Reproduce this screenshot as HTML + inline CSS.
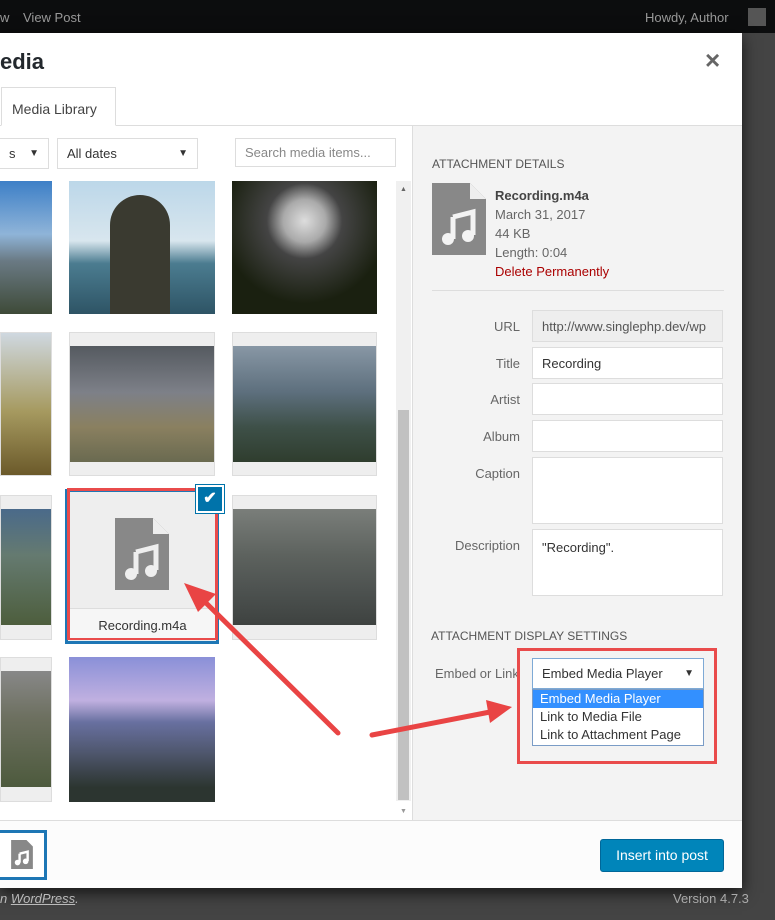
<!DOCTYPE html>
<html><head><meta charset="utf-8">
<style>
*{box-sizing:border-box;margin:0;padding:0}
body{width:775px;height:920px;overflow:hidden;background:#444;font-family:"Liberation Sans",sans-serif;position:relative;color:#444}
.abs{position:absolute}
.top{left:0;top:0;width:775px;height:33px;background:#0c0d0e;color:#999;font-size:13px}
.modal{left:0;top:33px;width:742px;height:855px;background:#fff;box-shadow:0 5px 15px rgba(0,0,0,.7)}
.side{left:412px;top:126px;width:330px;height:694px;background:#f3f3f3;border-left:1px solid #ddd}
.inp{background:#fff;border:1px solid #ddd;font-size:13px;color:#333;padding:0 9px;display:flex;align-items:center}
.lbl{font-size:13px;color:#666;text-align:right;width:108px}
.th{background:#eee;border:1px solid #ddd}
</style></head><body>
<div class="abs top">
 <span class="abs" style="left:0;top:10px">w</span>
 <span class="abs" style="left:23px;top:10px">View Post</span>
 <span class="abs" style="left:645px;top:10px">Howdy, Author</span>
 <div class="abs" style="left:748px;top:8px;width:18px;height:18px;background:#555"></div>
</div>
<div class="abs modal">
 <div class="abs" style="left:0;top:16px;font-size:22px;font-weight:bold;color:#23282d">edia</div>
 <div class="abs" style="left:705px;top:14px;font-size:26px;font-weight:bold;color:#666;line-height:1">×</div>
 <div class="abs" style="left:0;top:92px;width:742px;border-top:1px solid #ddd"></div>
 <div class="abs" style="left:1px;top:54px;width:115px;height:39px;border:1px solid #ddd;border-bottom:1px solid #fff;background:#fff;font-size:14px;color:#444;padding:13px 0 0 10px">Media Library</div>
</div>
<div class="abs inp" style="left:-1px;top:138px;width:50px;height:31px;justify-content:space-between;font-size:13px">s<span style="font-size:10px">▼</span></div>
<div class="abs inp" style="left:57px;top:138px;width:141px;height:31px;justify-content:space-between">All dates<span style="font-size:10px">▼</span></div>
<div class="abs inp" style="left:235px;top:138px;width:161px;height:29px;color:#888">Search media items...</div>
<div class="abs" style="left:0;top:181px;width:52px;height:133px;background:linear-gradient(#3d7fc7,#8fb4d8 40%,#6a7a84 60%,#3e4a38)"></div>
<div class="abs" style="left:69px;top:181px;width:146px;height:133px;background:linear-gradient(#bcd7e9,#d8e6ee 45%,#4b7c90 62%,#2e5465)"></div>
<div class="abs" style="left:110px;top:195px;width:60px;height:119px;background:#3a3a30;border-radius:30px 30px 0 0"></div>
<div class="abs" style="left:232px;top:181px;width:145px;height:133px;background:radial-gradient(circle at 50% 30%,#ddd 0,#aaa 18%,#444 32%,#1a2010 70%)"></div>
<div class="abs th" style="left:0;top:332px;width:52px;height:144px;background:linear-gradient(#cfd8e0,#a69a60 55%,#6b5a2a)"></div>
<div class="abs th" style="left:69px;top:332px;width:146px;height:144px"><div style="margin-top:13px;height:116px;background:linear-gradient(#555a60,#7d8088 40%,#8a8060 70%,#6a6a50)"></div></div>
<div class="abs th" style="left:232px;top:332px;width:145px;height:144px"><div style="margin-top:13px;height:116px;background:linear-gradient(#8897a5,#5d6f7d 40%,#3e5048 70%,#2f3d2e)"></div></div>
<div class="abs th" style="left:0;top:495px;width:52px;height:145px"><div style="margin-top:13px;height:116px;background:linear-gradient(#4a6a8a,#657a70 40%,#4d5e3d)"></div></div>
<div class="abs" style="left:65px;top:489px;width:154px;height:155px;border:3px solid #1e77b5;background:#eee"></div>
<div class="abs" style="left:67px;top:488px;width:151px;height:152px;border:3px solid #e94b4b"></div>
<svg class="abs" style="left:115px;top:518px" width="54" height="72" viewBox="0 0 54 72"><path d="M0 0H38L54 16V72H0Z" fill="#888"/><path d="M38 0V16H54" fill="#eee"/><path d="M21 34L41 29V52" stroke="#eee" stroke-width="5" fill="none"/><path d="M21 34V56" stroke="#eee" stroke-width="5"/><circle cx="16" cy="56" r="6" fill="#eee"/><circle cx="36" cy="53" r="6" fill="#eee"/></svg>
<div class="abs" style="left:70px;top:608px;width:145px;height:30px;border-top:1px solid #ddd;background:#f6f6f6;font-size:13px;color:#333;text-align:center;padding-top:9px">Recording.m4a</div>
<div class="abs" style="left:196px;top:485px;width:28px;height:28px;background:#0073aa;border:2px solid #fff;outline:1px solid #0073aa;color:#fff;font-size:16px;text-align:center;line-height:24px;font-weight:bold">✔</div>
<div class="abs th" style="left:232px;top:495px;width:145px;height:145px"><div style="margin-top:13px;height:116px;background:linear-gradient(#7a7e7a,#5d625e 40%,#4d5250 70%,#3e4240)"></div></div>
<div class="abs th" style="left:0;top:657px;width:52px;height:145px"><div style="margin-top:13px;height:116px;background:linear-gradient(#888,#6d7060 40%,#4d5a3d)"></div></div>
<div class="abs" style="left:69px;top:657px;width:146px;height:145px;background:linear-gradient(#8a90d8,#c0b0e0 30%,#6870a0 45%,#505870 65%,#2c3530 90%)"></div>
<div class="abs" style="left:396px;top:181px;width:15px;height:620px;background:#f0f0f0"></div>
<div class="abs" style="left:398px;top:410px;width:11px;height:390px;background:#c1c1c1"></div>
<div class="abs" style="left:400px;top:186px;font-size:7px;color:#666">▲</div>
<div class="abs" style="left:400px;top:808px;font-size:7px;color:#999">▼</div>
<div class="abs side">
 <div class="abs" style="left:19px;top:31px;font-size:12px;color:#555">ATTACHMENT DETAILS</div>
 <svg class="abs" style="left:19px;top:57px" width="54" height="72" viewBox="0 0 54 72"><path d="M0 0H38L54 16V72H0Z" fill="#888"/><path d="M38 0V16H54Z" fill="#eee"/><path d="M21 34L41 29V52" stroke="#f3f3f3" stroke-width="5" fill="none"/><path d="M21 34V56" stroke="#f3f3f3" stroke-width="5"/><circle cx="16" cy="56" r="6" fill="#f3f3f3"/><circle cx="36" cy="53" r="6" fill="#f3f3f3"/></svg>
 <div class="abs" style="left:82px;top:60px;font-size:13px;line-height:19px;color:#666"><b style="color:#444">Recording.m4a</b><br>March 31, 2017<br>44 KB<br>Length: 0:04<br><span style="color:#a00">Delete Permanently</span></div>
 <div class="abs" style="left:19px;top:164px;width:292px;border-top:1px solid #ddd"></div>
</div>
<div class="abs lbl" style="left:412px;top:319px">URL</div>
<div class="abs inp" style="left:532px;top:310px;width:191px;height:32px;background:#eee;color:#555">http://www.singlephp.dev/wp</div>
<div class="abs lbl" style="left:412px;top:356px">Title</div>
<div class="abs inp" style="left:532px;top:347px;width:191px;height:32px">Recording</div>
<div class="abs lbl" style="left:412px;top:392px">Artist</div>
<div class="abs inp" style="left:532px;top:383px;width:191px;height:32px"></div>
<div class="abs lbl" style="left:412px;top:429px">Album</div>
<div class="abs inp" style="left:532px;top:420px;width:191px;height:32px"></div>
<div class="abs lbl" style="left:412px;top:466px">Caption</div>
<div class="abs inp" style="left:532px;top:457px;width:191px;height:67px"></div>
<div class="abs lbl" style="left:412px;top:538px">Description</div>
<div class="abs inp" style="left:532px;top:529px;width:191px;height:67px;align-items:flex-start;padding-top:10px">"Recording".</div>
<div class="abs" style="left:431px;top:629px;font-size:12px;color:#555">ATTACHMENT DISPLAY SETTINGS</div>
<div class="abs" style="left:435px;top:666px;font-size:13px;color:#666">Embed or Link</div>
<div class="abs" style="left:517px;top:648px;width:200px;height:116px;border:3px solid #e94b4b"></div>
<div class="abs inp" style="left:532px;top:658px;width:172px;height:31px;border-color:#7eaad6;justify-content:space-between">Embed Media Player<span style="font-size:10px">▼</span></div>
<div class="abs" style="left:532px;top:689px;width:172px;height:57px;background:#fff;border:1px solid #7a9cc6;font-size:13px;color:#333;line-height:18px">
 <div style="background:#3390ff;color:#fff;padding-left:7px">Embed Media Player</div>
 <div style="padding-left:7px">Link to Media File</div>
 <div style="padding-left:7px">Link to Attachment Page</div>
</div>
<div class="abs" style="left:0;top:820px;width:742px;height:68px;background:#fcfcfc;border-top:1px solid #ddd"></div>
<div class="abs" style="left:-3px;top:830px;width:50px;height:50px;border:3px solid #1e77b5;background:#fff"></div>
<svg class="abs" style="left:11px;top:840px" width="22" height="29" viewBox="0 0 54 72"><path d="M0 0H38L54 16V72H0Z" fill="#888"/><path d="M21 34L41 29V52" stroke="#fff" stroke-width="6" fill="none"/><path d="M21 34V56" stroke="#fff" stroke-width="6"/><circle cx="16" cy="56" r="7" fill="#fff"/><circle cx="36" cy="53" r="7" fill="#fff"/></svg>
<div class="abs" style="left:600px;top:839px;width:124px;height:33px;background:#0085ba;border:1px solid #006799;border-radius:3px;color:#fff;font-size:14px;text-align:center;line-height:31px">Insert into post</div>
<div class="abs" style="left:0;top:891px;font-size:13px;color:#bbb;font-style:italic">n <u>WordPress</u>.</div>
<div class="abs" style="left:673px;top:891px;font-size:13px;color:#aaa">Version 4.7.3</div>
<svg class="abs" style="left:0;top:0" width="775" height="920">
 <line x1="338" y1="733" x2="202" y2="599" stroke="#e94444" stroke-width="5" stroke-linecap="round"/>
 <path d="M184 583L216 594L198 612Z" fill="#e94444"/>
 <line x1="372" y1="735" x2="490" y2="712" stroke="#e94444" stroke-width="5" stroke-linecap="round"/>
 <path d="M512 707L486 700L490 723Z" fill="#e94444"/>
</svg>
</body></html>
